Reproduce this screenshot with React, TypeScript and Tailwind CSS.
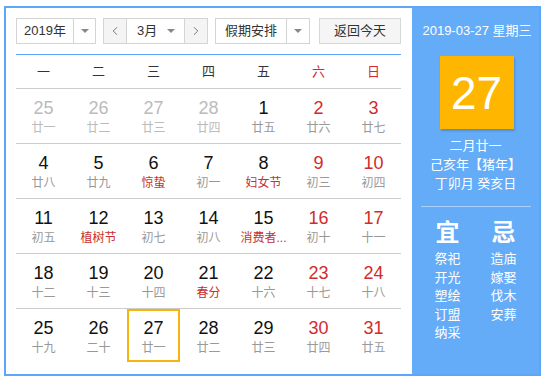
import { ChevronLeft, ChevronRight } from 'lucide-react';

type Day = {
    day: number;
    lunar: string;
    muted?: boolean;
    festival?: boolean;
    selected?: boolean;
};

const weekdays = ['一', '二', '三', '四', '五', '六', '日'];

const rows: Day[][] = [
    [
        { day: 25, lunar: '廿一', muted: true },
        { day: 26, lunar: '廿二', muted: true },
        { day: 27, lunar: '廿三', muted: true },
        { day: 28, lunar: '廿四', muted: true },
        { day: 1, lunar: '廿五' },
        { day: 2, lunar: '廿六' },
        { day: 3, lunar: '廿七' },
    ],
    [
        { day: 4, lunar: '廿八' },
        { day: 5, lunar: '廿九' },
        { day: 6, lunar: '惊蛰', festival: true },
        { day: 7, lunar: '初一' },
        { day: 8, lunar: '妇女节', festival: true },
        { day: 9, lunar: '初三' },
        { day: 10, lunar: '初四' },
    ],
    [
        { day: 11, lunar: '初五' },
        { day: 12, lunar: '植树节', festival: true },
        { day: 13, lunar: '初七' },
        { day: 14, lunar: '初八' },
        { day: 15, lunar: '消费者...', festival: true },
        { day: 16, lunar: '初十' },
        { day: 17, lunar: '十一' },
    ],
    [
        { day: 18, lunar: '十二' },
        { day: 19, lunar: '十三' },
        { day: 20, lunar: '十四' },
        { day: 21, lunar: '春分', festival: true },
        { day: 22, lunar: '十六' },
        { day: 23, lunar: '十七' },
        { day: 24, lunar: '十八' },
    ],
    [
        { day: 25, lunar: '十九' },
        { day: 26, lunar: '二十' },
        { day: 27, lunar: '廿一', selected: true },
        { day: 28, lunar: '廿二' },
        { day: 29, lunar: '廿三' },
        { day: 30, lunar: '廿四' },
        { day: 31, lunar: '廿五' },
    ],
];

const yi = ['祭祀', '开光', '塑绘', '订盟', '纳采'];
const ji = ['造庙', '嫁娶', '伐木', '安葬'];

const Caret = () => (
    <span className="w-0 h-0 border-l-[4px] border-r-[4px] border-t-[4px] border-l-transparent border-r-transparent border-t-[#888]" />
);

const Select = ({ label, width, textWidth }: { label: string; width: string; textWidth: string }) => (
    <div className={`${width} h-[26px] flex border border-[#d4d4d4] bg-white`}>
        <div className={`${textWidth} flex items-center justify-center text-[13px] text-[#333]`}>{label}</div>
        <div className="flex-1 flex items-center justify-center border-l border-[#d4d4d4]">
            <Caret />
        </div>
    </div>
);

const DayCell = ({ d, col }: { d: Day; col: number }) => {
    const weekend = col >= 5;
    const numColor = d.muted ? 'text-[#bbbbbb]' : weekend ? 'text-[#d22b2b]' : 'text-[#111]';
    const lunarColor = d.festival ? 'text-[#c9302c]' : d.muted ? 'text-[#bbbbbb]' : 'text-[#999]';
    return (
        <div className="h-[54px] flex items-start justify-center">
            <div
                className={`w-[53px] h-[53px] flex flex-col items-center ${
                    d.selected ? 'border-2 border-[#f5b50f] pt-[6px]' : 'pt-[8px]'
                }`}
            >
                <div className={`text-[18px] leading-[22px] ${numColor}`}>{d.day}</div>
                <div className={`text-[12px] leading-[16px] mt-[1px] whitespace-nowrap ${lunarColor}`}>{d.lunar}</div>
            </div>
        </div>
    );
};

const App = () => {
    return (
        <div
            className="w-[547px] h-[381px] bg-white pt-[6px] pl-[4px]"
            style={{ fontFamily: '"Liberation Sans", "Noto Sans CJK SC", sans-serif' }}
        >
            <div className="w-[537px] h-[370px] border-2 border-[#5da8f6] flex">
                {/* calendar */}
                <div className="w-[406px] pt-[10px] pl-[10px] pr-[11px]">
                    <div className="flex items-center h-[26px]">
                        <Select label="2019年" width="w-[80px]" textWidth="w-[56px]" />
                        <div className="ml-[7px] w-[105px] h-[26px] flex border border-[#d4d4d4]">
                            <div className="w-[23px] flex items-center justify-center bg-[#f4f4f4] border-r border-[#d4d4d4] text-[#666]">
                                <ChevronLeft size={14} strokeWidth={1.5} />
                            </div>
                            <div className="flex-1 flex items-center pl-[10px] pr-[9px] text-[13px] text-[#333]">
                                <span className="flex-1">3月</span>
                                <Caret />
                            </div>
                            <div className="w-[23px] flex items-center justify-center bg-[#f4f4f4] border-l border-[#d4d4d4] text-[#666]">
                                <ChevronRight size={14} strokeWidth={1.5} />
                            </div>
                        </div>
                        <div className="ml-[7px]">
                            <Select label="假期安排" width="w-[95px]" textWidth="w-[70px]" />
                        </div>
                        <div className="ml-[9px] w-[82px] h-[26px] flex items-center justify-center border border-[#d8d8d8] bg-[#f5f5f5] text-[13px] text-[#333]">
                            返回今天
                        </div>
                    </div>

                    <div className="mt-[10px] border-t border-[#5da8f6]">
                        <div className="grid grid-cols-7 h-[34px] border-b border-[#cccccc]">
                            {weekdays.map((w, i) => (
                                <div
                                    key={w}
                                    className={`flex items-center justify-center text-[13px] ${
                                        i >= 5 ? 'text-[#d22b2b]' : 'text-[#333]'
                                    }`}
                                >
                                    {w}
                                </div>
                            ))}
                        </div>
                        {rows.map((row, ri) => (
                            <div
                                key={ri}
                                className={`grid grid-cols-7 ${ri < rows.length - 1 ? 'border-b border-[#cccccc]' : ''}`}
                            >
                                {row.map((d, ci) => (
                                    <DayCell key={ci} d={d} col={ci} />
                                ))}
                            </div>
                        ))}
                    </div>
                </div>

                {/* side panel */}
                <div className="flex-1 bg-[#64acf8] text-white flex flex-col items-center">
                    <div className="mt-[13px] text-[13px] leading-[20px] pl-[3px]">2019-03-27 星期三</div>
                    <div className="mt-[15px] ml-[2px] w-[74px] h-[73px] bg-[#ffb600] shadow-[1px_2px_2px_rgba(0,0,0,0.18)] flex items-center justify-center">
                        <span className="text-[46px] leading-none">27</span>
                    </div>
                    <div className="mt-[7px] text-[13px] leading-[19px] text-center">
                        <div>二月廿一</div>
                        <div>己亥年【猪年】</div>
                        <div>丁卯月 癸亥日</div>
                    </div>
                    <div className="mt-[13px] w-[110px] h-px bg-[#a9d1fb]" />
                    <div className="mt-[12px] flex">
                        <div className="w-[56px] flex flex-col items-center">
                            <div className="text-[24px] leading-[28px] font-bold">宜</div>
                            <div className="mt-[3px] text-[13px] leading-[18.5px] text-center">
                                {yi.map((t) => (
                                    <div key={t}>{t}</div>
                                ))}
                            </div>
                        </div>
                        <div className="w-[56px] flex flex-col items-center">
                            <div className="text-[24px] leading-[28px] font-bold">忌</div>
                            <div className="mt-[3px] text-[13px] leading-[18.5px] text-center">
                                {ji.map((t) => (
                                    <div key={t}>{t}</div>
                                ))}
                            </div>
                        </div>
                    </div>
                </div>
            </div>
        </div>
    );
};

export default App;
